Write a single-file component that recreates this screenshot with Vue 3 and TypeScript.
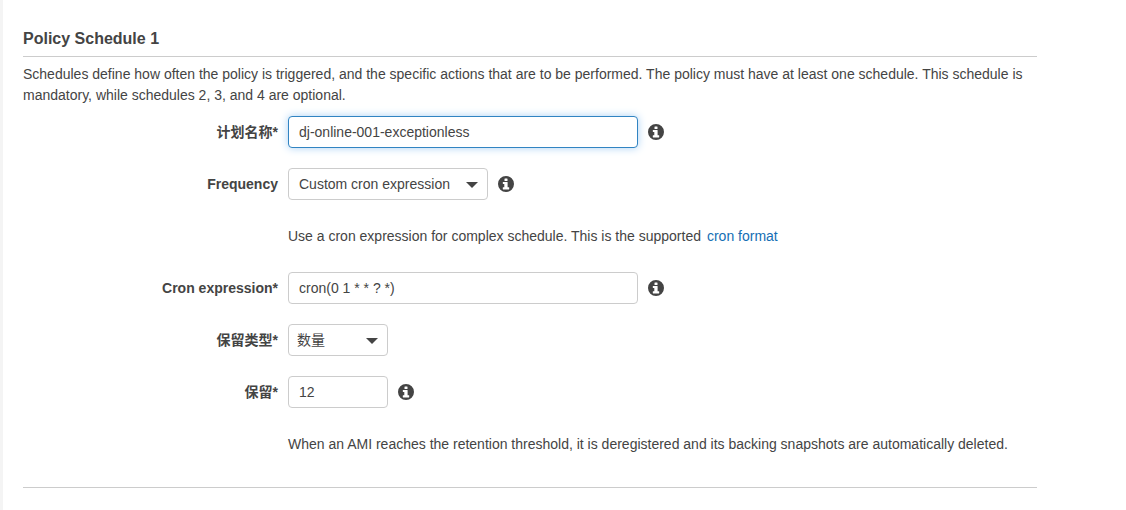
<script setup lang="ts">
import { defineComponent, h, ref } from 'vue'

const name = ref('dj-online-001-exceptionless')
const frequency = ref('custom')
const cron = ref('cron(0 1 * * ? *)')
const retentionType = ref('count')
const retain = ref('12')

const infoPath =
  'M8 0a8 8 0 1 1 0 16a8 8 0 1 1 0-16z M6.8 2.6a.3.3 0 0 0-.3.3v1.8a.3.3 0 0 0 .3.3h2.4a.3.3 0 0 0 .3-.3V2.9a.3.3 0 0 0-.3-.3z M5.1 6a.3.3 0 0 0-.3.3v1.3a.3.3 0 0 0 .3.3h1.2v3.4H5.1a.3.3 0 0 0-.3.3v1.5a.3.3 0 0 0 .3.3h5.8a.3.3 0 0 0 .3-.3v-1.5a.3.3 0 0 0-.3-.3H9.6v-5a.3.3 0 0 0-.3-.3z'

const InfoIcon = defineComponent({
  setup: () => () =>
    h('svg', { viewBox: '0 0 16 16', width: 16, height: 16, fill: 'currentColor', 'aria-hidden': 'true' }, [
      h('path', { d: infoPath, 'fill-rule': 'evenodd' }),
    ]),
})
</script>

<template>
  <main class="page">
    <form class="section" @submit.prevent>
      <h2 class="title">Policy Schedule 1</h2>
      <p class="intro">
        Schedules define how often the policy is triggered, and the specific actions that are to be performed. The
        policy must have at least one schedule. This schedule is mandatory, while schedules 2, 3, and 4 are optional.
      </p>

      <div class="rows">
        <div class="row">
          <label class="label" for="name">计划名称*</label>
          <input id="name" v-model="name" class="control wide active" type="text" />
          <button class="info" type="button" aria-label="Info"><InfoIcon /></button>
        </div>

        <div class="row">
          <label class="label" for="frequency">Frequency</label>
          <div class="picker medium">
            <select id="frequency" v-model="frequency" class="control">
              <option value="custom">Custom cron expression</option>
            </select>
            <svg class="caret" viewBox="0 0 12 8" aria-hidden="true"><path d="M0 2h12L6 8z" /></svg>
          </div>
          <button class="info" type="button" aria-label="Info"><InfoIcon /></button>
        </div>

        <div class="row">
          <p class="hint">
            <span>Use a cron expression for complex schedule. This is the supported</span>
            <a class="link" href="#cron">cron format</a>
          </p>
        </div>

        <div class="row">
          <label class="label" for="cron">Cron expression*</label>
          <input id="cron" v-model="cron" class="control wide" type="text" />
          <button class="info" type="button" aria-label="Info"><InfoIcon /></button>
        </div>

        <div class="row">
          <label class="label" for="retention">保留类型*</label>
          <div class="picker small">
            <select id="retention" v-model="retentionType" class="control compact">
              <option value="count">数量</option>
            </select>
            <svg class="caret" viewBox="0 0 12 8" aria-hidden="true"><path d="M0 2h12L6 8z" /></svg>
          </div>
        </div>

        <div class="row">
          <label class="label" for="retain">保留*</label>
          <input id="retain" v-model="retain" class="control small" type="text" />
          <button class="info" type="button" aria-label="Info"><InfoIcon /></button>
        </div>

        <div class="row">
          <p class="hint">
            When an AMI reaches the retention threshold, it is deregistered and its backing snapshots are automatically
            deleted.
          </p>
        </div>
      </div>
    </form>
  </main>
</template>

<style>
body {
  margin: 0;
  background: #fff;
}
</style>

<style scoped>
.page {
  box-sizing: border-box;
  min-height: 100vh;
  padding: 28px 89px 22px 20px;
  border-left: 3px solid #f4f4f4;
  color: #444;
  font: 14px/21px 'Liberation Sans', 'Noto Sans CJK SC', sans-serif;
}
.section {
  border-bottom: 1px solid #ccc;
  padding-bottom: 27px;
}
.title {
  margin: 0;
  padding-bottom: 7px;
  border-bottom: 1px solid #ccc;
  font-size: 16px;
  line-height: 21px;
}
.intro {
  margin: 7px 0 10px;
}
.rows {
  display: grid;
  gap: 20px;
}
.row {
  display: grid;
  grid-template-columns: 255px auto 1fr;
  column-gap: 10px;
  align-items: center;
  min-height: 32px;
}
.label {
  font-weight: bold;
  text-align: right;
}
.control {
  box-sizing: border-box;
  width: 100%;
  height: 32px;
  margin: 0;
  padding: 0 10px;
  border: 1px solid #ccc;
  border-radius: 4px;
  background: #fff;
  color: #444;
  font: inherit;
  outline: none;
  appearance: none;
}
.control.compact {
  padding-left: 8px;
}
.control.active,
.control:focus {
  border-color: #3184c2;
  box-shadow: 0 0 8px #a9d1f5;
}
.wide {
  width: 350px;
}
.medium {
  width: 200px;
}
.small {
  width: 100px;
}
.picker {
  display: grid;
  align-items: center;
}
.picker > * {
  grid-area: 1 / 1;
}
.caret {
  justify-self: end;
  width: 12px;
  height: 8px;
  margin-right: 10px;
  fill: #444;
  pointer-events: none;
}
.info {
  display: flex;
  justify-self: start;
  padding: 0;
  border: 0;
  background: none;
  color: #444;
  cursor: pointer;
}
.hint {
  display: flex;
  gap: 6px;
  grid-column: 2 / -1;
  margin: 0;
}
.link {
  color: #146eb4;
  text-decoration: none;
}
</style>
